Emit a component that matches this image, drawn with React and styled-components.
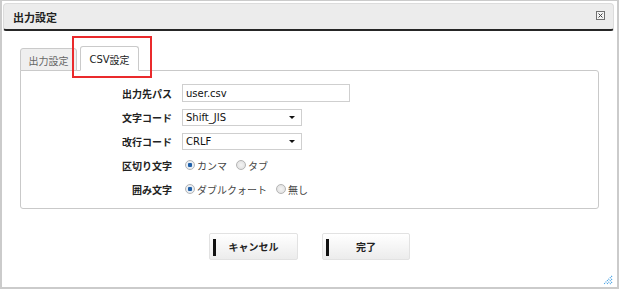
import React from 'react';
import styled, { createGlobalStyle } from 'styled-components';

const GlobalStyle = createGlobalStyle`
  html, body { margin: 0; padding: 0; background: #fff; }
  body { font-family: "DejaVu Sans", "Noto Sans CJK JP", sans-serif; }
`;

const JP = `"Noto Sans CJK JP", sans-serif`;
const LATIN = `"DejaVu Sans", "Noto Sans CJK JP", sans-serif`;

const Dialog = styled.div`
  position: relative;
  width: 619px;
  height: 289px;
  box-sizing: border-box;
  border: 2px solid #cbcbcb;
  border-top-width: 1px;
  background: #fff;
`;

const Header = styled.div`
  margin: 2px 3px 0 1px;
  height: 28px;
  box-sizing: border-box;
  display: flex;
  align-items: center;
  justify-content: space-between;
  padding: 0 8px 0 9px;
  background: #ececec;
  border: 1px solid #dcdcdc;
  border-bottom: 2px solid #262626;
  border-radius: 4px 4px 3px 3px;
`;

const Title = styled.span`
  font-family: ${JP};
  font-size: 11px;
  font-weight: 700;
  color: #222;
`;

const CloseBox = styled.span`
  width: 9px;
  height: 9px;
  display: flex;
  margin-top: -2px;
`;

const Body = styled.div`
  padding: 15px 17px 0 17px;
`;

const TabBar = styled.div`
  position: relative;
  display: flex;
  align-items: flex-end;
  gap: 3px;
  padding-left: 1px;
  height: 24px;
`;

const Tab = styled.div`
  height: ${p => (p.$active ? '25px' : '23px')};
  box-sizing: border-box;
  width: ${p => p.$w}px;
  display: flex;
  align-items: center;
  justify-content: center;
  padding-top: 2px;
  font-family: ${p => (p.$latin ? LATIN : JP)};
  font-size: 10px;
  color: ${p => (p.$active ? '#222' : '#666')};
  background: ${p => (p.$active ? '#fff' : '#efefef')};
  border: 1px solid #cacaca;
  border-bottom: ${p => (p.$active ? '1px solid #fff' : '1px solid #cacaca')};
  border-radius: 3px 3px 0 0;
  margin-bottom: -1px;
  z-index: 1;
  span.jp { font-family: ${JP}; }
`;

const Highlight = styled.div`
  position: absolute;
  left: 53px;
  top: -10px;
  width: 80px;
  height: 42px;
  box-sizing: border-box;
  border: 2px solid #ea2a2c;
  z-index: 2;
`;

const Panel = styled.div`
  height: 139px;
  box-sizing: border-box;
  border: 1px solid #c9c9c9;
  border-radius: 0 3px 3px 3px;
  padding-top: 10px;
  margin-left: 1px;
  width: 579px;
`;

const Form = styled.div`
  display: grid;
  grid-template-columns: 151px 1fr;
  grid-auto-rows: 24px;
  column-gap: 10px;
  align-items: center;
`;

const Label = styled.div`
  text-align: right;
  font-family: ${JP};
  font-size: 10px;
  font-weight: 700;
  color: #222;
`;

const TextInput = styled.div`
  width: 168px;
  height: 18px;
  box-sizing: border-box;
  border: 1px solid #cfcfcf;
  display: flex;
  align-items: center;
  padding-left: 3px;
  font-family: ${LATIN};
  font-size: 10px;
  color: #111;
`;

const Select = styled.div`
  width: 120px;
  height: 17px;
  box-sizing: border-box;
  border: 1px solid #cfcfcf;
  display: flex;
  align-items: center;
  justify-content: space-between;
  padding: 0 6px 0 3px;
  font-family: ${LATIN};
  font-size: 10px;
  color: #111;
`;

const Arrow = styled.span`
  width: 0;
  height: 0;
  border-left: 3px solid transparent;
  border-right: 3px solid transparent;
  border-top: 3px solid #111;
`;

const RadioGroup = styled.div`
  display: flex;
  align-items: center;
  padding-left: 3px;
  gap: 9px;
`;

const RadioItem = styled.label`
  display: flex;
  align-items: center;
  gap: 2px;
  font-family: ${JP};
  font-size: 10px;
  color: #444;
`;

const Dot = styled.span`
  width: 10px;
  height: 10px;
  box-sizing: border-box;
  border-radius: 50%;
  border: 1px solid #b4b4b4;
  background: ${p => (p.$on ? 'radial-gradient(circle, #1f5fa8 0 2px, #e8eef4 2.5px)' : 'radial-gradient(circle, #f4f4f4, #dcdcdc)')};
`;

const Buttons = styled.div`
  display: flex;
  justify-content: center;
  gap: 24px;
  margin-top: 24px;
`;

const Button = styled.div`
  position: relative;
  width: ${p => p.$w}px;
  height: 27px;
  box-sizing: border-box;
  border: 1px solid #e2e2e2;
  border-radius: 2px;
  background: linear-gradient(#ffffff, #ececec);
  display: flex;
  align-items: center;
  justify-content: center;
  font-family: ${JP};
  font-size: 10px;
  font-weight: 700;
  color: #222;
  &::before {
    content: '';
    position: absolute;
    left: 3px;
    top: 5px;
    width: 3px;
    height: 17px;
    background: #111;
  }
`;

const Grip = styled.svg`
  position: absolute;
  right: 4px;
  bottom: 2px;
`;

const Radio = ({ on, children }) => (
  <RadioItem>
    <Dot $on={on} />
    {children}
  </RadioItem>
);

export default function App() {
  return (
    <>
      <GlobalStyle />
      <Dialog>
        <Header>
          <Title>出力設定</Title>
          <CloseBox>
            <svg width="9" height="9" viewBox="0 0 9 9">
              <rect x="0.5" y="0.5" width="8" height="8" fill="#f4f4f4" stroke="#707070" />
              <path d="M2.5 2.5 L6.5 6.5 M6.5 2.5 L2.5 6.5" stroke="#444" strokeWidth="1" />
            </svg>
          </CloseBox>
        </Header>
        <Body>
          <TabBar>
            <Tab $w={57}>出力設定</Tab>
            <Tab $w={59} $active $latin>CSV<span className="jp">設定</span></Tab>
            <Highlight />
          </TabBar>
          <Panel>
            <Form>
              <Label>出力先パス</Label>
              <TextInput>user.csv</TextInput>
              <Label>文字コード</Label>
              <Select>Shift_JIS<Arrow /></Select>
              <Label>改行コード</Label>
              <Select>CRLF<Arrow /></Select>
              <Label>区切り文字</Label>
              <RadioGroup>
                <Radio on>カンマ</Radio>
                <Radio>タブ</Radio>
              </RadioGroup>
              <Label>囲み文字</Label>
              <RadioGroup>
                <Radio on>ダブルクォート</Radio>
                <Radio>無し</Radio>
              </RadioGroup>
            </Form>
          </Panel>
          <Buttons>
            <Button $w={89}>キャンセル</Button>
            <Button $w={88}>完了</Button>
          </Buttons>
        </Body>
        <Grip width="10" height="10" viewBox="0 0 10 10">
          <path d="M9 1 L1 9 M9 4 L4 9 M9 7 L7 9" stroke="#3d9be0" strokeWidth="1.2" strokeDasharray="1 1" />
        </Grip>
      </Dialog>
    </>
  );
}
